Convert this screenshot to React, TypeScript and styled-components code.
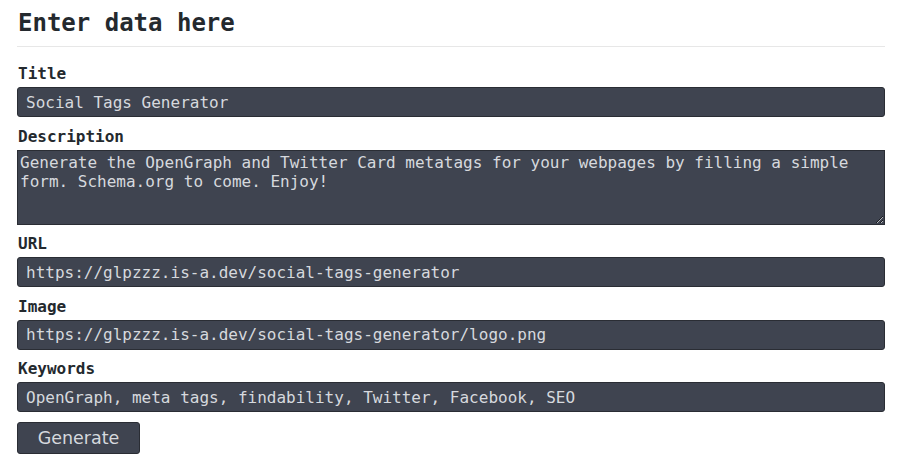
import React from "react";
import styled, { createGlobalStyle } from "styled-components";

const Global = createGlobalStyle`
  html, body { margin: 0; padding: 0; background: #ffffff; }
  body { font-family: "DejaVu Sans Mono", monospace; color: #24292e; }
`;

const Page = styled.main`
  width: 868px;
  padding: 0 0 0 17px;
`;

const Heading = styled.h1`
  margin: 0;
  padding: 9px 0 9px 1px;
  font-family: "DejaVu Sans Mono", monospace;
  font-size: 24px;
  line-height: 28px;
  font-weight: bold;
  color: #24292e;
  border-bottom: 1px solid #e7e7e7;
`;

const Form = styled.form`
  display: flex;
  flex-direction: column;
`;

const Label = styled.label`
  display: block;
  margin: 9.5px 0 3px 1px;
  font-family: "DejaVu Sans Mono", monospace;
  font-size: 16px;
  line-height: 20px;
  font-weight: bold;
  color: #24292e;

  &:first-child {
    margin-top: 17px;
  }
`;

const fieldBase = `
  box-sizing: border-box;
  width: 868px;
  background: #3f4450;
  color: #d6d9de;
  border: 1px solid #2a2d34;
  font-family: "DejaVu Sans Mono", monospace;
  font-size: 16px;
  outline: none;
  margin: 0;
`;

const Input = styled.input`
  ${fieldBase}
  height: 30px;
  padding: 0 8px;
  border-radius: 3px;
  line-height: 28px;
`;

const TextArea = styled.textarea`
  ${fieldBase}
  display: block;
  height: 75px;
  padding: 2px 2px;
  line-height: 19px;
  border-radius: 0;
  resize: vertical;
`;

const Button = styled.button`
  align-self: flex-start;
  margin-top: 10px;
  width: 123px;
  height: 32px;
  background: #3f4450;
  color: #d6d9de;
  border: 1px solid #2a2d34;
  border-radius: 3px;
  font-family: "DejaVu Sans", sans-serif;
  font-size: 17.5px;
  padding: 0;
  cursor: pointer;
`;

export default function App() {
  return (
    <>
      <Global />
      <Page>
        <Heading>Enter data here</Heading>
        <Form onSubmit={(e) => e.preventDefault()}>
          <Label htmlFor="title">Title</Label>
          <Input id="title" defaultValue="Social Tags Generator" />
          <Label htmlFor="description">Description</Label>
          <TextArea
            id="description"
            defaultValue="Generate the OpenGraph and Twitter Card metatags for your webpages by filling a simple form. Schema.org to come. Enjoy!"
          />
          <Label htmlFor="url">URL</Label>
          <Input id="url" defaultValue="https://glpzzz.is-a.dev/social-tags-generator" />
          <Label htmlFor="image">Image</Label>
          <Input id="image" defaultValue="https://glpzzz.is-a.dev/social-tags-generator/logo.png" />
          <Label htmlFor="keywords">Keywords</Label>
          <Input
            id="keywords"
            defaultValue="OpenGraph, meta tags, findability, Twitter, Facebook, SEO"
          />
          <Button type="submit">Generate</Button>
        </Form>
      </Page>
    </>
  );
}
